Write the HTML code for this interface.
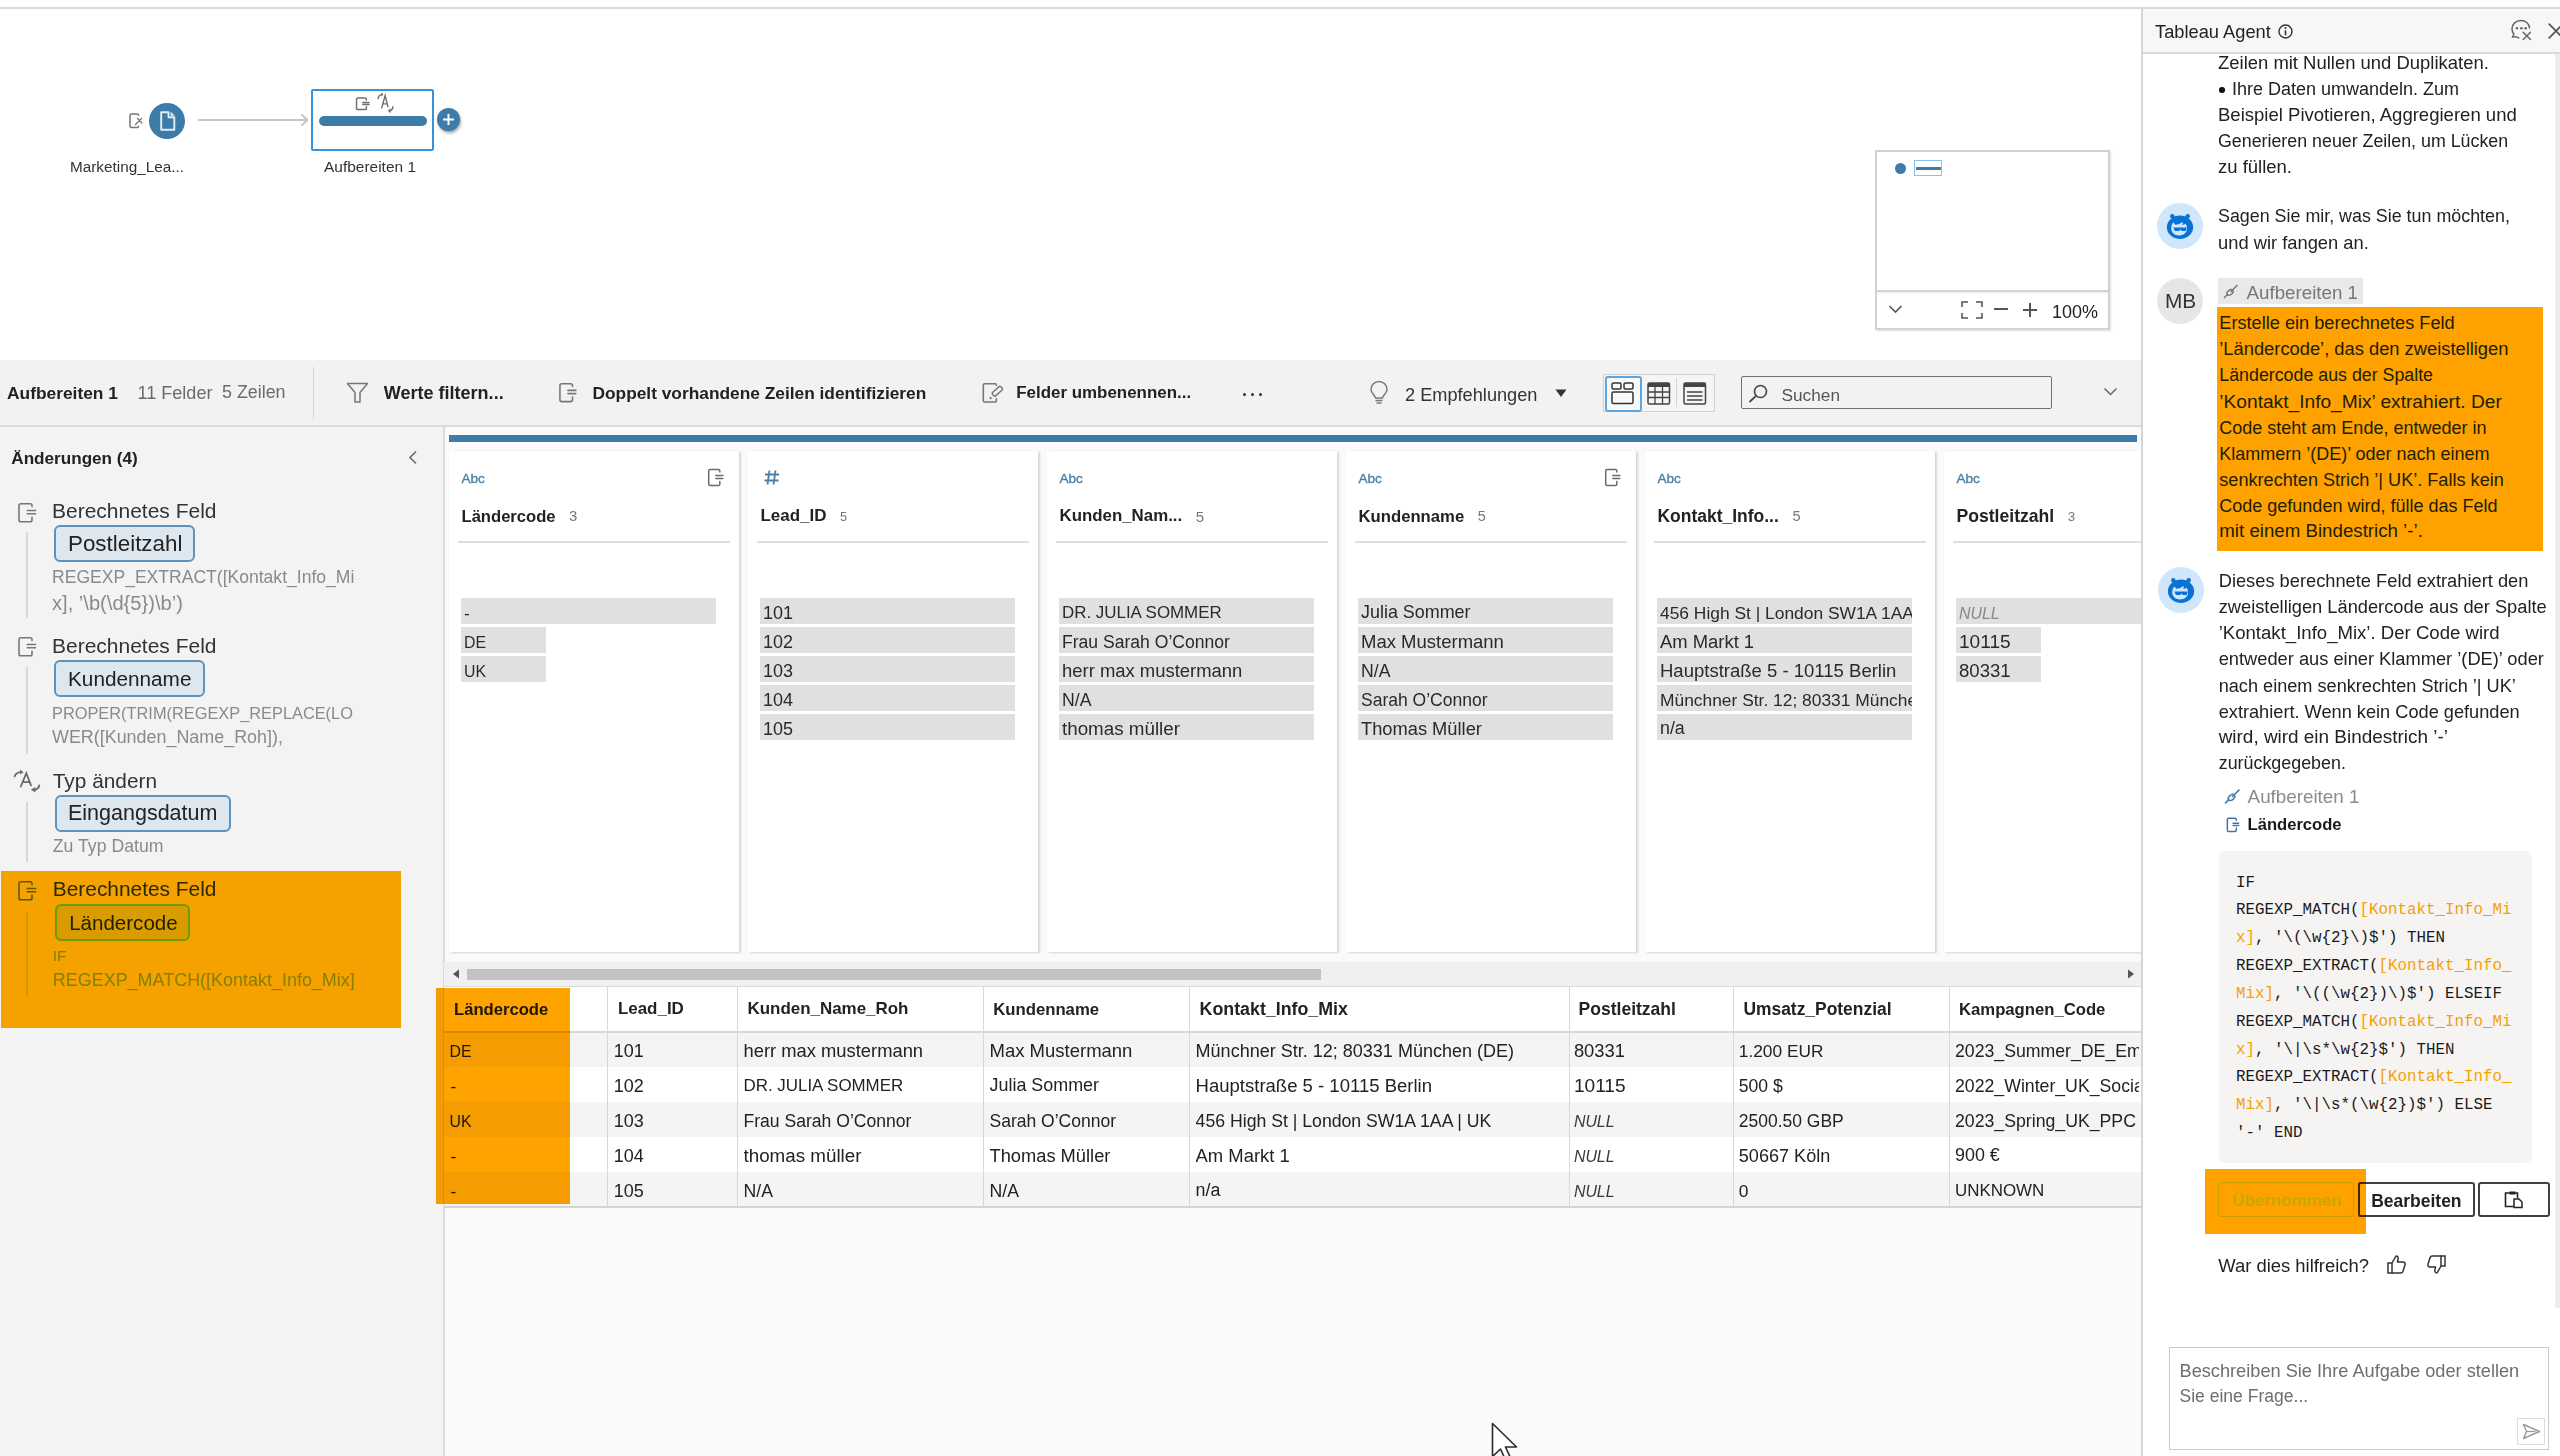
<!DOCTYPE html>
<html><head><meta charset="utf-8">
<style>
html,body{margin:0;padding:0;}
body{width:2560px;height:1456px;position:relative;overflow:hidden;background:#fff;font-family:"Liberation Sans",sans-serif;}
.ts,.tm{position:absolute;white-space:pre;line-height:1;}
.ts{font-family:"Liberation Sans",sans-serif;}
.tm{font-family:"Liberation Mono",monospace;}
svg{position:absolute;overflow:visible;}
</style></head><body>
<div style="position:absolute;left:0px;top:7px;width:2560px;height:2px;background:#d9d9d9"></div>
<div style="position:absolute;left:0px;top:360px;width:2141px;height:66px;background:#f2f2f2"></div>
<div style="position:absolute;left:0px;top:425px;width:2141px;height:2px;background:#dcdcdc"></div>
<div style="position:absolute;left:0px;top:427px;width:443px;height:1029px;background:#f3f3f3"></div>
<div style="position:absolute;left:443px;top:427px;width:2px;height:1029px;background:#dadada"></div>
<div style="position:absolute;left:445px;top:427px;width:1696px;height:1029px;background:#fafafa"></div>
<div style="position:absolute;left:2141px;top:9px;width:2px;height:1447px;background:#d6d6d6"></div>
<div style="position:absolute;left:2143px;top:9px;width:417px;height:43px;background:#f7f7f7"></div>
<div style="position:absolute;left:2143px;top:52px;width:417px;height:2px;background:#d9d9d9"></div>
<svg style="left:128px;top:112px" width="18" height="18" viewBox="0 0 18 18"><path d="M10.5 3.2V3Q10.5 2 9.5 2H3.5Q2 2 2 3.5V14Q2 15.5 3.5 15.5H9.5Q10.5 15.5 10.5 14.5V14.2" fill="none" stroke="#777" stroke-width="1.5" stroke-linecap="round"/><path d="M7.5 12.5l6-6M9.5 6.5l4.5 4.5" stroke="#777" stroke-width="1.3" stroke-linecap="round"/></svg>
<div style="position:absolute;left:149px;top:103px;width:36px;height:36px;background:#3d7ca8;border-radius:50%"></div>
<svg style="left:159px;top:110px" width="18" height="22" viewBox="0 0 18 22"><path d="M2.2 2.2h7.3v5h5.8v12.6H2.2z" fill="none" stroke="#e4edf4" stroke-width="1.9" stroke-linejoin="round"/><path d="M11.6 1.6l4.2 4.2h-4.2z" fill="#e4edf4"/></svg>
<div style="position:absolute;left:198px;top:119.2px;width:108px;height:2px;background:#c6c6c6"></div>
<svg style="left:300px;top:113px" width="10" height="14" viewBox="0 0 10 14"><path d="M2 2l5.5 5L2 12" fill="none" stroke="#c6c6c6" stroke-width="2" stroke-linecap="round" stroke-linejoin="round"/></svg>
<div style="position:absolute;left:311px;top:89px;width:119px;height:58px;border:2px solid #3593de;border-radius:2px;background:#fff"></div>
<div style="position:absolute;left:319px;top:116px;width:108px;height:10px;background:#3d7ca8;border-radius:5px"></div>
<svg style="left:354.59px;top:96.93px" width="15.19" height="13.96" viewBox="0 0 20 22" preserveAspectRatio="none"><path vector-effect="non-scaling-stroke" d="M15 4.6V3.5Q15 1.7 13.2 1.7H3.8Q2 1.7 2 3.5V18Q2 19.8 3.8 19.8H13.2Q15 19.8 15 18V15.2M10.3 8.5H18.5M10.3 11.7H18.5" fill="none" stroke="#707070" stroke-width="1.5" stroke-linecap="round"/></svg>
<svg style="left:373.85px;top:87.10px" width="24.31" height="31.45" viewBox="0 0 40 34" preserveAspectRatio="none"><path vector-effect="non-scaling-stroke" d="M6.6 12.4Q8 8.6 12.6 8.2M12.8 22.5L18.3 9.2 23 21.4M14.8 18.2H21.6M31.3 21.3Q30.5 25.3 26.5 25.8" fill="none" stroke="#707070" stroke-width="1.4" stroke-linecap="round"/><path d="M12 5.6L15.6 8.2 12.2 10.4zM27.4 23L22.8 25.8 27.2 28.3z" fill="#707070"/></svg>
<div style="position:absolute;left:437px;top:108px;width:23px;height:23px;background:#3d7ca8;border-radius:50%;box-shadow:1px 2px 3px rgba(0,0,0,0.35)"></div>
<svg style="left:441px;top:112px" width="15" height="15" viewBox="0 0 15 15"><path d="M7.5 2v11M2 7.5h11" stroke="#fff" stroke-width="2"/></svg>
<div class="ts" style="left:70px;top:159.09px;font-size:15.3px;color:#333;">Marketing_Lea...</div>
<div class="ts" style="left:324px;top:158.95px;font-size:15.47px;color:#333;">Aufbereiten 1</div>
<div style="position:absolute;left:1875px;top:150px;width:231px;height:176px;border:2px solid #d2d2d2;background:#fff;box-shadow:1px 1px 2px rgba(0,0,0,0.12)"></div>
<div style="position:absolute;left:1877px;top:290px;width:231px;height:2px;background:#d4d4d4;box-shadow:0 1px 2px rgba(0,0,0,0.1)"></div>
<div style="position:absolute;left:1895px;top:163px;width:11px;height:11px;background:#3d7ca8;border-radius:50%"></div>
<div style="position:absolute;left:1914px;top:160px;width:26px;height:14px;border:1.5px solid #8cc2ec;background:#fff"></div>
<div style="position:absolute;left:1916px;top:167px;width:25px;height:3px;background:#3d7ca8"></div>
<svg style="left:1888px;top:304px" width="15" height="11" viewBox="0 0 15 11"><path d="M1.5 2l6 6 6-6" fill="none" stroke="#555" stroke-width="1.6"/></svg>
<svg style="left:1961px;top:301px" width="22" height="18" viewBox="0 0 22 18"><path d="M1 6V1h6M15 1h6v5M21 12v5h-6M7 17H1v-5" fill="none" stroke="#555" stroke-width="1.6"/></svg>
<div style="position:absolute;left:1994px;top:308px;width:14px;height:2px;background:#555"></div>
<div style="position:absolute;left:2023px;top:309px;width:14px;height:2px;background:#555"></div>
<div style="position:absolute;left:2029px;top:303px;width:2px;height:14px;background:#555"></div>
<div class="ts" style="left:2052px;top:303.31px;font-size:17.99px;color:#222;">100%</div>
<div class="ts" style="left:7px;top:384.84px;font-size:17.37px;color:#222;font-weight:bold;">Aufbereiten 1</div>
<div class="ts" style="left:137.5px;top:384.24px;font-size:18.07px;color:#6b6b6b;">11 Felder</div>
<div class="ts" style="left:222px;top:384.43px;font-size:17.85px;color:#6b6b6b;">5 Zeilen</div>
<div style="position:absolute;left:313px;top:367px;width:1px;height:52px;background:#d4d4d4"></div>
<svg style="left:346px;top:382px" width="23" height="22" viewBox="0 0 23 22"><path d="M1.5 1.5h20l-7.5 9v9.5h-5v-9.5z" fill="none" stroke="#777" stroke-width="1.5" stroke-linejoin="round"/></svg>
<div class="ts" style="left:383.75px;top:384.26px;font-size:18.05px;color:#222;font-weight:bold;">Werte filtern...</div>
<svg style="left:557.59px;top:382.11px" width="19.34" height="21.78" viewBox="0 0 20 22" preserveAspectRatio="none"><path vector-effect="non-scaling-stroke" d="M15 4.6V3.5Q15 1.7 13.2 1.7H3.8Q2 1.7 2 3.5V18Q2 19.8 3.8 19.8H13.2Q15 19.8 15 18V15.2M10.3 8.5H18.5M10.3 11.7H18.5" fill="none" stroke="#777" stroke-width="1.6" stroke-linecap="round"/></svg>
<div class="ts" style="left:592.5px;top:384.88px;font-size:17.32px;color:#222;font-weight:bold;">Doppelt vorhandene Zeilen identifizieren</div>
<svg style="left:980px;top:380px" width="26" height="26" viewBox="0 0 26 26"><path d="M16.3 5.3V4.8Q16.3 3.8 15.3 3.8H4.8Q3.3 3.8 3.3 5.3V20.5Q3.3 22 4.8 22H15.3Q16.3 22 16.3 21V18.8" fill="none" stroke="#777" stroke-width="1.6" stroke-linecap="round"/><rect x="-5.6" y="-2.25" width="11.2" height="4.5" rx="1.2" transform="translate(17.35 11.25) rotate(-42)" fill="none" stroke="#777" stroke-width="1.5"/><path d="M9.7 16.2L12.6 18.8 9.6 19.3z" fill="#777"/></svg>
<div class="ts" style="left:1016.25px;top:385.21px;font-size:16.93px;color:#222;font-weight:bold;">Felder umbenennen...</div>
<div style="position:absolute;left:1243px;top:393px;width:3px;height:3px;background:#333;border-radius:50%"></div>
<div style="position:absolute;left:1251px;top:393px;width:3px;height:3px;background:#333;border-radius:50%"></div>
<div style="position:absolute;left:1259px;top:393px;width:3px;height:3px;background:#333;border-radius:50%"></div>
<svg style="left:1369px;top:382px" width="20" height="24" viewBox="0 0 20 24"><path d="M6.5 16c0-2.5-4.5-4.5-4.5-8.5a8 8 0 0 1 16 0c0 4-4.5 6-4.5 8.5z" fill="none" stroke="#777" stroke-width="1.5" stroke-linejoin="round"/><path d="M6.5 18.5h7M7.5 21h5" stroke="#777" stroke-width="1.5"/></svg>
<div class="ts" style="left:1405px;top:385.64px;font-size:18.19px;color:#333;">2 Empfehlungen</div>
<svg style="left:1555px;top:389px" width="12" height="9" viewBox="0 0 12 9"><path d="M0.5 0.5h11L6 8z" fill="#333"/></svg>
<div style="position:absolute;left:1603px;top:374px;width:110px;height:36px;border:1px solid #d3d3d3;background:#f5f5f5"></div>
<div style="position:absolute;left:1605px;top:376px;width:33px;height:32px;border:2px solid #5aa7e6;border-radius:3px;background:#f9f9f9"></div>
<div style="position:absolute;left:1676px;top:378px;width:1px;height:29px;background:#d3d3d3"></div>
<svg style="left:1611px;top:382px" width="24" height="23" viewBox="0 0 24 23"><rect x="1" y="1" width="9" height="6" rx="1.5" fill="none" stroke="#333" stroke-width="1.5"/><rect x="13" y="1" width="9" height="6" rx="1.5" fill="none" stroke="#333" stroke-width="1.5"/><rect x="1" y="10" width="21" height="11.5" rx="1.5" fill="none" stroke="#333" stroke-width="1.5"/></svg>
<svg style="left:1647px;top:382px" width="24" height="23" viewBox="0 0 24 23"><rect x="1" y="1" width="21.5" height="21" rx="1.5" fill="none" stroke="#444" stroke-width="1.5"/><rect x="1" y="1" width="21.5" height="4" fill="#444"/><path d="M1 10h21.5M1 15.5h21.5M8 5v17M15.5 5v17" stroke="#444" stroke-width="1.3"/></svg>
<svg style="left:1683px;top:382px" width="24" height="23" viewBox="0 0 24 23"><rect x="1" y="1" width="21.5" height="21" rx="1.5" fill="none" stroke="#444" stroke-width="1.5"/><rect x="1" y="1" width="21.5" height="4" fill="#444"/><path d="M4 10h15.5M4 14h15.5M4 18h15.5" stroke="#444" stroke-width="1.3"/></svg>
<div style="position:absolute;left:1741px;top:376px;width:309px;height:31px;border:1.5px solid #6f6f6f;border-radius:2px;background:#f2f2f2"></div>
<svg style="left:1748px;top:384px" width="21" height="19" viewBox="0 0 21 19"><circle cx="12.5" cy="7.5" r="6" fill="none" stroke="#444" stroke-width="1.6"/><path d="M8.3 11.7L1.5 18" stroke="#444" stroke-width="1.8"/></svg>
<div class="ts" style="left:1781.5px;top:386.54px;font-size:17.25px;color:#555;">Suchen</div>
<svg style="left:2103px;top:387px" width="15" height="10" viewBox="0 0 15 10"><path d="M1.5 1.5l6 6 6-6" fill="none" stroke="#666" stroke-width="1.5"/></svg>
<div class="ts" style="left:11.3px;top:450.05px;font-size:17.12px;color:#222;font-weight:bold;">Änderungen (4)</div>
<svg style="left:408px;top:450px" width="10" height="15" viewBox="0 0 10 15"><path d="M8 1.5l-6 6 6 6" fill="none" stroke="#666" stroke-width="1.5"/></svg>
<svg style="left:17.00px;top:501.80px" width="20.00" height="22.00" viewBox="0 0 20 22" preserveAspectRatio="none"><path vector-effect="non-scaling-stroke" d="M15 4.6V3.5Q15 1.7 13.2 1.7H3.8Q2 1.7 2 3.5V18Q2 19.8 3.8 19.8H13.2Q15 19.8 15 18V15.2M10.3 8.5H18.5M10.3 11.7H18.5" fill="none" stroke="#777" stroke-width="1.6" stroke-linecap="round"/></svg>
<div class="ts" style="left:52px;top:500.46px;font-size:20.99px;color:#333;">Berechnetes Feld</div>
<div style="position:absolute;left:54.4px;top:525.2px;width:141px;height:37px;background:#dde7ef;border:2px solid #5e93bb;border-radius:6px;box-sizing:border-box"></div>
<div class="ts" style="left:68px;top:532.87px;font-size:22.39px;color:#222;">Postleitzahl</div>
<div style="position:absolute;left:25.5px;top:532px;width:2px;height:86px;background:#d9d9d9"></div>
<div class="ts" style="left:52px;top:569.17px;font-size:17.56px;color:#8a8a8a;">REGEXP_EXTRACT([Kontakt_Info_Mi</div>
<div class="ts" style="left:52px;top:593.28px;font-size:20.14px;color:#8a8a8a;">x], ’\b(\d{5})\b’)</div>
<svg style="left:17.00px;top:635.80px" width="20.00" height="22.00" viewBox="0 0 20 22" preserveAspectRatio="none"><path vector-effect="non-scaling-stroke" d="M15 4.6V3.5Q15 1.7 13.2 1.7H3.8Q2 1.7 2 3.5V18Q2 19.8 3.8 19.8H13.2Q15 19.8 15 18V15.2M10.3 8.5H18.5M10.3 11.7H18.5" fill="none" stroke="#777" stroke-width="1.6" stroke-linecap="round"/></svg>
<div class="ts" style="left:52px;top:635.36px;font-size:20.99px;color:#333;">Berechnetes Feld</div>
<div style="position:absolute;left:54.4px;top:660px;width:151px;height:37px;background:#dde7ef;border:2px solid #5e93bb;border-radius:6px;box-sizing:border-box"></div>
<div class="ts" style="left:68px;top:669.15px;font-size:20.76px;color:#222;">Kundenname</div>
<div style="position:absolute;left:25.5px;top:667px;width:2px;height:87px;background:#d9d9d9"></div>
<div class="ts" style="left:52px;top:704.69px;font-size:16.37px;color:#8a8a8a;">PROPER(TRIM(REGEXP_REPLACE(LO</div>
<div class="ts" style="left:52px;top:729.38px;font-size:17.91px;color:#8a8a8a;">WER([Kunden_Name_Roh]),</div>
<svg style="left:8.00px;top:764.00px" width="40.00" height="34.00" viewBox="0 0 40 34" preserveAspectRatio="none"><path vector-effect="non-scaling-stroke" d="M6.6 12.4Q8 8.6 12.6 8.2M12.8 22.5L18.3 9.2 23 21.4M14.8 18.2H21.6M31.3 21.3Q30.5 25.3 26.5 25.8" fill="none" stroke="#6a6a6a" stroke-width="1.8" stroke-linecap="round"/><path d="M12 5.6L15.6 8.2 12.2 10.4zM27.4 23L22.8 25.8 27.2 28.3z" fill="#6a6a6a"/></svg>
<div class="ts" style="left:52.8px;top:770.79px;font-size:20.83px;color:#333;">Typ ändern</div>
<div style="position:absolute;left:54.9px;top:795px;width:176.5px;height:37px;background:#dde7ef;border:2px solid #5e93bb;border-radius:6px;box-sizing:border-box"></div>
<div class="ts" style="left:68px;top:802.52px;font-size:21.51px;color:#222;">Eingangsdatum</div>
<div style="position:absolute;left:25.5px;top:802px;width:2px;height:60px;background:#d9d9d9"></div>
<div class="ts" style="left:52.8px;top:838.17px;font-size:17.68px;color:#8a8a8a;">Zu Typ Datum</div>
<div style="position:absolute;left:1px;top:871px;width:400px;height:157px;background:#f5a100"></div>
<svg style="left:17.00px;top:879.80px" width="20.00" height="22.00" viewBox="0 0 20 22" preserveAspectRatio="none"><path vector-effect="non-scaling-stroke" d="M15 4.6V3.5Q15 1.7 13.2 1.7H3.8Q2 1.7 2 3.5V18Q2 19.8 3.8 19.8H13.2Q15 19.8 15 18V15.2M10.3 8.5H18.5M10.3 11.7H18.5" fill="none" stroke="#5a5a00" stroke-width="1.6" stroke-linecap="round"/></svg>
<div class="ts" style="left:52.8px;top:878.64px;font-size:20.89px;color:#2a2a00;">Berechnetes Feld</div>
<div style="position:absolute;left:54.9px;top:903.7px;width:135.6px;height:37px;background:#d89c00;border:2px solid #6d9a00;border-radius:6px;box-sizing:border-box"></div>
<div class="ts" style="left:69.2px;top:912.54px;font-size:20.54px;color:#1f1f00;">Ländercode</div>
<div style="position:absolute;left:25.5px;top:911px;width:2px;height:86px;background:#cf9a00"></div>
<div class="ts" style="left:52.8px;top:948.2px;font-size:15.41px;color:#858000;">IF</div>
<div class="ts" style="left:52.8px;top:972.03px;font-size:17.97px;color:#858000;">REGEXP_MATCH([Kontakt_Info_Mix]</div>
<div style="position:absolute;left:449px;top:435px;width:1688px;height:7px;background:#3d7ca8"></div>
<div style="position:absolute;left:444px;top:442px;width:1697px;height:520px;overflow:hidden">
<div style="position:absolute;left:5px;top:9px;width:290px;height:501px;background:#fff;box-shadow:2px 1px 2px rgba(0,0,0,0.14), 0 0 1px rgba(0,0,0,0.06)"></div>
<div class="ts" style="left:17.5px;top:30.06px;font-size:13.58px;color:#4a80a8;-webkit-text-stroke:0.35px #4a80a8;">Abc</div>
<svg style="left:262.97px;top:26.20px" width="17.13" height="19.54" viewBox="0 0 20 22" preserveAspectRatio="none"><path vector-effect="non-scaling-stroke" d="M15 4.6V3.5Q15 1.7 13.2 1.7H3.8Q2 1.7 2 3.5V18Q2 19.8 3.8 19.8H13.2Q15 19.8 15 18V15.2M10.3 8.5H18.5M10.3 11.7H18.5" fill="none" stroke="#6a6a6a" stroke-width="1.5" stroke-linecap="round"/></svg>
<div class="ts" style="left:17.5px;top:66.69px;font-size:16.6px;color:#222;font-weight:bold;">Ländercode</div>
<div class="ts" style="left:125.1px;top:66.92px;font-size:14.92px;color:#777;">3</div>
<div style="position:absolute;left:14px;top:99px;width:272px;height:2px;background:#dedede"></div>
<div style="position:absolute;left:16.5px;top:156px;width:255px;height:25.5px;background:#e0e0e0;overflow:hidden">
<div class="ts" style="left:3.5px;top:6.81px;font-size:17.4px;color:#2a2a2a;">-</div>
</div>
<div style="position:absolute;left:16.5px;top:185px;width:85px;height:25.5px;background:#e0e0e0;overflow:hidden">
<div class="ts" style="left:3.5px;top:8.14px;font-size:15.84px;color:#2a2a2a;">DE</div>
</div>
<div style="position:absolute;left:16.5px;top:214px;width:85px;height:25.5px;background:#e0e0e0;overflow:hidden">
<div class="ts" style="left:3.5px;top:8.14px;font-size:15.84px;color:#2a2a2a;">UK</div>
</div>
<div style="position:absolute;left:304px;top:9px;width:290px;height:501px;background:#fff;box-shadow:2px 1px 2px rgba(0,0,0,0.14), 0 0 1px rgba(0,0,0,0.06)"></div>
<svg style="left:319.5px;top:28px" width="16" height="15" viewBox="0 0 16 15"><path d="M5.5 0.5l-2 14M11.5 0.5l-2 14M1 4.5h14M0.5 10.5h14" stroke="#4b80a9" stroke-width="1.8"/></svg>
<div class="ts" style="left:316.5px;top:66.38px;font-size:16.97px;color:#222;font-weight:bold;">Lead_ID</div>
<div class="ts" style="left:396.0px;top:68.75px;font-size:12.76px;color:#777;">5</div>
<div style="position:absolute;left:313px;top:99px;width:272px;height:2px;background:#dedede"></div>
<div style="position:absolute;left:315.5px;top:156px;width:255px;height:25.5px;background:#e0e0e0;overflow:hidden">
<div class="ts" style="left:3.5px;top:6.32px;font-size:17.98px;color:#2a2a2a;">101</div>
</div>
<div style="position:absolute;left:315.5px;top:185px;width:255px;height:25.5px;background:#e0e0e0;overflow:hidden">
<div class="ts" style="left:3.5px;top:6.32px;font-size:17.98px;color:#2a2a2a;">102</div>
</div>
<div style="position:absolute;left:315.5px;top:214px;width:255px;height:25.5px;background:#e0e0e0;overflow:hidden">
<div class="ts" style="left:3.5px;top:6.32px;font-size:17.98px;color:#2a2a2a;">103</div>
</div>
<div style="position:absolute;left:315.5px;top:243px;width:255px;height:25.5px;background:#e0e0e0;overflow:hidden">
<div class="ts" style="left:3.5px;top:6.32px;font-size:17.98px;color:#2a2a2a;">104</div>
</div>
<div style="position:absolute;left:315.5px;top:272px;width:255px;height:25.5px;background:#e0e0e0;overflow:hidden">
<div class="ts" style="left:3.5px;top:6.32px;font-size:17.98px;color:#2a2a2a;">105</div>
</div>
<div style="position:absolute;left:603px;top:9px;width:290px;height:501px;background:#fff;box-shadow:2px 1px 2px rgba(0,0,0,0.14), 0 0 1px rgba(0,0,0,0.06)"></div>
<div class="ts" style="left:615.5px;top:30.06px;font-size:13.58px;color:#4a80a8;-webkit-text-stroke:0.35px #4a80a8;">Abc</div>
<div class="ts" style="left:615.5px;top:66.47px;font-size:16.86px;color:#222;font-weight:bold;">Kunden_Nam...</div>
<div class="ts" style="left:751.7px;top:66.77px;font-size:15.1px;color:#777;">5</div>
<div style="position:absolute;left:612px;top:99px;width:272px;height:2px;background:#dedede"></div>
<div style="position:absolute;left:614.5px;top:156px;width:255px;height:25.5px;background:#e0e0e0;overflow:hidden">
<div class="ts" style="left:3.5px;top:7.23px;font-size:16.91px;color:#2a2a2a;">DR. JULIA SOMMER</div>
</div>
<div style="position:absolute;left:614.5px;top:185px;width:255px;height:25.5px;background:#e0e0e0;overflow:hidden">
<div class="ts" style="left:3.5px;top:6.67px;font-size:17.57px;color:#2a2a2a;">Frau Sarah O’Connor</div>
</div>
<div style="position:absolute;left:614.5px;top:214px;width:255px;height:25.5px;background:#e0e0e0;overflow:hidden">
<div class="ts" style="left:3.5px;top:5.93px;font-size:18.44px;color:#2a2a2a;">herr max mustermann</div>
</div>
<div style="position:absolute;left:614.5px;top:243px;width:255px;height:25.5px;background:#e0e0e0;overflow:hidden">
<div class="ts" style="left:3.5px;top:6.61px;font-size:17.64px;color:#2a2a2a;">N/A</div>
</div>
<div style="position:absolute;left:614.5px;top:272px;width:255px;height:25.5px;background:#e0e0e0;overflow:hidden">
<div class="ts" style="left:3.5px;top:5.63px;font-size:18.79px;color:#2a2a2a;">thomas müller</div>
</div>
<div style="position:absolute;left:902px;top:9px;width:290px;height:501px;background:#fff;box-shadow:2px 1px 2px rgba(0,0,0,0.14), 0 0 1px rgba(0,0,0,0.06)"></div>
<div class="ts" style="left:914.5px;top:30.06px;font-size:13.58px;color:#4a80a8;-webkit-text-stroke:0.35px #4a80a8;">Abc</div>
<svg style="left:1159.97px;top:26.20px" width="17.13" height="19.54" viewBox="0 0 20 22" preserveAspectRatio="none"><path vector-effect="non-scaling-stroke" d="M15 4.6V3.5Q15 1.7 13.2 1.7H3.8Q2 1.7 2 3.5V18Q2 19.8 3.8 19.8H13.2Q15 19.8 15 18V15.2M10.3 8.5H18.5M10.3 11.7H18.5" fill="none" stroke="#6a6a6a" stroke-width="1.5" stroke-linecap="round"/></svg>
<div class="ts" style="left:914.5px;top:66.61px;font-size:16.7px;color:#222;font-weight:bold;">Kundenname</div>
<div class="ts" style="left:1033.8px;top:67.38px;font-size:14.38px;color:#777;">5</div>
<div style="position:absolute;left:911px;top:99px;width:272px;height:2px;background:#dedede"></div>
<div style="position:absolute;left:913.5px;top:156px;width:255px;height:25.5px;background:#e0e0e0;overflow:hidden">
<div class="ts" style="left:3.5px;top:6.36px;font-size:17.93px;color:#2a2a2a;">Julia Sommer</div>
</div>
<div style="position:absolute;left:913.5px;top:185px;width:255px;height:25.5px;background:#e0e0e0;overflow:hidden">
<div class="ts" style="left:3.5px;top:5.88px;font-size:18.5px;color:#2a2a2a;">Max Mustermann</div>
</div>
<div style="position:absolute;left:913.5px;top:214px;width:255px;height:25.5px;background:#e0e0e0;overflow:hidden">
<div class="ts" style="left:3.5px;top:6.61px;font-size:17.64px;color:#2a2a2a;">N/A</div>
</div>
<div style="position:absolute;left:913.5px;top:243px;width:255px;height:25.5px;background:#e0e0e0;overflow:hidden">
<div class="ts" style="left:3.5px;top:6.7px;font-size:17.53px;color:#2a2a2a;">Sarah O’Connor</div>
</div>
<div style="position:absolute;left:913.5px;top:272px;width:255px;height:25.5px;background:#e0e0e0;overflow:hidden">
<div class="ts" style="left:3.5px;top:6.04px;font-size:18.3px;color:#2a2a2a;">Thomas Müller</div>
</div>
<div style="position:absolute;left:1201px;top:9px;width:290px;height:501px;background:#fff;box-shadow:2px 1px 2px rgba(0,0,0,0.14), 0 0 1px rgba(0,0,0,0.06)"></div>
<div class="ts" style="left:1213.5px;top:30.06px;font-size:13.58px;color:#4a80a8;-webkit-text-stroke:0.35px #4a80a8;">Abc</div>
<div class="ts" style="left:1213.5px;top:65.94px;font-size:17.48px;color:#222;font-weight:bold;">Kontakt_Info...</div>
<div class="ts" style="left:1348.4px;top:67.22px;font-size:14.56px;color:#777;">5</div>
<div style="position:absolute;left:1210px;top:99px;width:272px;height:2px;background:#dedede"></div>
<div style="position:absolute;left:1212.5px;top:156px;width:255px;height:25.5px;background:#e0e0e0;overflow:hidden">
<div class="ts" style="left:3.5px;top:6.81px;font-size:17.4px;color:#2a2a2a;">456 High St | London SW1A 1AA | UK</div>
</div>
<div style="position:absolute;left:1212.5px;top:185px;width:255px;height:25.5px;background:#e0e0e0;overflow:hidden">
<div class="ts" style="left:3.5px;top:5.95px;font-size:18.41px;color:#2a2a2a;">Am Markt 1</div>
</div>
<div style="position:absolute;left:1212.5px;top:214px;width:255px;height:25.5px;background:#e0e0e0;overflow:hidden">
<div class="ts" style="left:3.5px;top:5.85px;font-size:18.53px;color:#2a2a2a;">Hauptstraße 5 - 10115 Berlin</div>
</div>
<div style="position:absolute;left:1212.5px;top:243px;width:255px;height:25.5px;background:#e0e0e0;overflow:hidden">
<div class="ts" style="left:3.5px;top:6.81px;font-size:17.4px;color:#2a2a2a;">Münchner Str. 12; 80331 München (DE)</div>
</div>
<div style="position:absolute;left:1212.5px;top:272px;width:255px;height:25.5px;background:#e0e0e0;overflow:hidden">
<div class="ts" style="left:3.5px;top:6.44px;font-size:17.84px;color:#2a2a2a;">n/a</div>
</div>
<div style="position:absolute;left:1500px;top:9px;width:290px;height:501px;background:#fff;box-shadow:2px 1px 2px rgba(0,0,0,0.14), 0 0 1px rgba(0,0,0,0.06)"></div>
<div class="ts" style="left:1512.5px;top:30.06px;font-size:13.58px;color:#4a80a8;-webkit-text-stroke:0.35px #4a80a8;">Abc</div>
<div class="ts" style="left:1512.5px;top:65.86px;font-size:17.58px;color:#222;font-weight:bold;">Postleitzahl</div>
<div class="ts" style="left:1623.7px;top:68.29px;font-size:13.3px;color:#777;">3</div>
<div style="position:absolute;left:1509px;top:99px;width:272px;height:2px;background:#dedede"></div>
<div style="position:absolute;left:1511.5px;top:156px;width:255px;height:25.5px;background:#e0e0e0;overflow:hidden">
<div class="ts" style="left:3.5px;top:8.07px;font-size:15.92px;color:#888;font-style:italic;">NULL</div>
</div>
<div style="position:absolute;left:1511.5px;top:185px;width:85px;height:25.5px;background:#e0e0e0;overflow:hidden">
<div class="ts" style="left:3.5px;top:5.37px;font-size:19.1px;color:#2a2a2a;">10115</div>
</div>
<div style="position:absolute;left:1511.5px;top:214px;width:85px;height:25.5px;background:#e0e0e0;overflow:hidden">
<div class="ts" style="left:3.5px;top:5.8px;font-size:18.59px;color:#2a2a2a;">80331</div>
</div>
</div>
<div style="position:absolute;left:444px;top:962px;width:1697px;height:24px;background:#f0f0f0"></div>
<div style="position:absolute;left:466.5px;top:968.5px;width:854px;height:11.5px;background:#c2c2c2"></div>
<svg style="left:452px;top:969px" width="8" height="10" viewBox="0 0 8 10"><path d="M7 0.5v9L1 5z" fill="#555"/></svg>
<svg style="left:2127px;top:969px" width="8" height="10" viewBox="0 0 8 10"><path d="M1 0.5v9L7 5z" fill="#555"/></svg>
<div style="position:absolute;left:444px;top:986px;width:1697px;height:45px;background:#fff"></div>
<div style="position:absolute;left:444px;top:985.5px;width:1697px;height:1px;background:#dcdcdc"></div>
<div style="position:absolute;left:444px;top:1031.5px;width:1697px;height:35px;background:#f4f4f4"></div>
<div style="position:absolute;left:444px;top:1066.5px;width:1697px;height:35px;background:#ffffff"></div>
<div style="position:absolute;left:444px;top:1101.5px;width:1697px;height:35px;background:#f4f4f4"></div>
<div style="position:absolute;left:444px;top:1136.5px;width:1697px;height:35px;background:#ffffff"></div>
<div style="position:absolute;left:444px;top:1171.5px;width:1697px;height:35px;background:#f4f4f4"></div>
<div style="position:absolute;left:444px;top:1206px;width:1697px;height:1.5px;background:#d4d4d4"></div>
<div style="position:absolute;left:444px;top:1031px;width:1697px;height:1.8px;background:#d6d6d6"></div>
<div style="position:absolute;left:607px;top:986px;width:1.3px;height:220px;background:#d8d8d8"></div>
<div style="position:absolute;left:736.5px;top:986px;width:1.3px;height:220px;background:#d8d8d8"></div>
<div style="position:absolute;left:983px;top:986px;width:1.3px;height:220px;background:#d8d8d8"></div>
<div style="position:absolute;left:1189px;top:986px;width:1.3px;height:220px;background:#d8d8d8"></div>
<div style="position:absolute;left:1569px;top:986px;width:1.3px;height:220px;background:#d8d8d8"></div>
<div style="position:absolute;left:1733px;top:986px;width:1.3px;height:220px;background:#d8d8d8"></div>
<div style="position:absolute;left:1949px;top:986px;width:1.3px;height:220px;background:#d8d8d8"></div>
<div class="ts" style="left:454px;top:1001.66px;font-size:16.64px;color:#222;font-weight:bold;">Ländercode</div>
<div class="ts" style="left:449.5px;top:1040.18px;font-size:15.84px;color:#222;width:155.5px;overflow:hidden;padding:0.25em 0 0.3em 0;">DE</div>
<div class="ts" style="left:450.5px;top:1073.46px;font-size:17.4px;color:#222;width:153.5px;overflow:hidden;padding:0.25em 0 0.3em 0;">-</div>
<div class="ts" style="left:449.5px;top:1110.18px;font-size:15.84px;color:#222;width:155.5px;overflow:hidden;padding:0.25em 0 0.3em 0;">UK</div>
<div class="ts" style="left:450.5px;top:1143.46px;font-size:17.4px;color:#222;width:153.5px;overflow:hidden;padding:0.25em 0 0.3em 0;">-</div>
<div class="ts" style="left:450.5px;top:1178.46px;font-size:17.4px;color:#222;width:153.5px;overflow:hidden;padding:0.25em 0 0.3em 0;">-</div>
<div class="ts" style="left:617.9px;top:1001.38px;font-size:16.97px;color:#222;font-weight:bold;">Lead_ID</div>
<div class="ts" style="left:613.7px;top:1037.83px;font-size:17.98px;color:#222;width:120.79999999999995px;overflow:hidden;padding:0.25em 0 0.3em 0;">101</div>
<div class="ts" style="left:613.7px;top:1072.83px;font-size:17.98px;color:#222;width:120.79999999999995px;overflow:hidden;padding:0.25em 0 0.3em 0;">102</div>
<div class="ts" style="left:613.7px;top:1107.83px;font-size:17.98px;color:#222;width:120.79999999999995px;overflow:hidden;padding:0.25em 0 0.3em 0;">103</div>
<div class="ts" style="left:613.7px;top:1142.83px;font-size:17.98px;color:#222;width:120.79999999999995px;overflow:hidden;padding:0.25em 0 0.3em 0;">104</div>
<div class="ts" style="left:613.7px;top:1177.83px;font-size:17.98px;color:#222;width:120.79999999999995px;overflow:hidden;padding:0.25em 0 0.3em 0;">105</div>
<div class="ts" style="left:747.5px;top:1001.4px;font-size:16.94px;color:#222;font-weight:bold;">Kunden_Name_Roh</div>
<div class="ts" style="left:743.5px;top:1037.38px;font-size:18.38px;color:#222;width:237.5px;overflow:hidden;padding:0.25em 0 0.3em 0;">herr max mustermann</div>
<div class="ts" style="left:743.5px;top:1074.0px;font-size:16.91px;color:#222;width:237.5px;overflow:hidden;padding:0.25em 0 0.3em 0;">DR. JULIA SOMMER</div>
<div class="ts" style="left:743.5px;top:1108.28px;font-size:17.57px;color:#222;width:237.5px;overflow:hidden;padding:0.25em 0 0.3em 0;">Frau Sarah O’Connor</div>
<div class="ts" style="left:743.5px;top:1141.93px;font-size:18.79px;color:#222;width:237.5px;overflow:hidden;padding:0.25em 0 0.3em 0;">thomas müller</div>
<div class="ts" style="left:743.5px;top:1178.2px;font-size:17.64px;color:#222;width:237.5px;overflow:hidden;padding:0.25em 0 0.3em 0;">N/A</div>
<div class="ts" style="left:993.2px;top:1001.58px;font-size:16.73px;color:#222;font-weight:bold;">Kundenname</div>
<div class="ts" style="left:989.5px;top:1037.26px;font-size:18.5px;color:#222;width:197.5px;overflow:hidden;padding:0.25em 0 0.3em 0;">Max Mustermann</div>
<div class="ts" style="left:989.5px;top:1072.88px;font-size:17.93px;color:#222;width:197.5px;overflow:hidden;padding:0.25em 0 0.3em 0;">Julia Sommer</div>
<div class="ts" style="left:989.5px;top:1108.32px;font-size:17.53px;color:#222;width:197.5px;overflow:hidden;padding:0.25em 0 0.3em 0;">Sarah O’Connor</div>
<div class="ts" style="left:989.5px;top:1142.46px;font-size:18.3px;color:#222;width:197.5px;overflow:hidden;padding:0.25em 0 0.3em 0;">Thomas Müller</div>
<div class="ts" style="left:989.5px;top:1178.2px;font-size:17.64px;color:#222;width:197.5px;overflow:hidden;padding:0.25em 0 0.3em 0;">N/A</div>
<div class="ts" style="left:1199.6px;top:1000.66px;font-size:17.81px;color:#222;font-weight:bold;">Kontakt_Info_Mix</div>
<div class="ts" style="left:1195.6px;top:1037.76px;font-size:18.03px;color:#222;width:371.4000000000001px;overflow:hidden;padding:0.25em 0 0.3em 0;">Münchner Str. 12; 80331 München (DE)</div>
<div class="ts" style="left:1195.6px;top:1072.22px;font-size:18.53px;color:#222;width:371.4000000000001px;overflow:hidden;padding:0.25em 0 0.3em 0;">Hauptstraße 5 - 10115 Berlin</div>
<div class="ts" style="left:1195.6px;top:1108.16px;font-size:17.67px;color:#222;width:371.4000000000001px;overflow:hidden;padding:0.25em 0 0.3em 0;">456 High St | London SW1A 1AA | UK</div>
<div class="ts" style="left:1195.6px;top:1142.35px;font-size:18.41px;color:#222;width:371.4000000000001px;overflow:hidden;padding:0.25em 0 0.3em 0;">Am Markt 1</div>
<div class="ts" style="left:1195.6px;top:1177.98px;font-size:17.84px;color:#222;width:371.4000000000001px;overflow:hidden;padding:0.25em 0 0.3em 0;">n/a</div>
<div class="ts" style="left:1578.6px;top:1000.9px;font-size:17.53px;color:#222;font-weight:bold;">Postleitzahl</div>
<div class="ts" style="left:1573.9px;top:1037.38px;font-size:18.38px;color:#222;width:157.0999999999999px;overflow:hidden;padding:0.25em 0 0.3em 0;">80331</div>
<div class="ts" style="left:1573.9px;top:1071.59px;font-size:19.1px;color:#222;width:157.0999999999999px;overflow:hidden;padding:0.25em 0 0.3em 0;">10115</div>
<div class="ts" style="left:1573.9px;top:1110.09px;font-size:15.92px;color:#3a3a3a;font-style:italic;width:157.0999999999999px;overflow:hidden;padding:0.25em 0 0.3em 0;">NULL</div>
<div class="ts" style="left:1573.9px;top:1145.09px;font-size:15.92px;color:#3a3a3a;font-style:italic;width:157.0999999999999px;overflow:hidden;padding:0.25em 0 0.3em 0;">NULL</div>
<div class="ts" style="left:1573.9px;top:1180.09px;font-size:15.92px;color:#3a3a3a;font-style:italic;width:157.0999999999999px;overflow:hidden;padding:0.25em 0 0.3em 0;">NULL</div>
<div class="ts" style="left:1743.4px;top:1000.98px;font-size:17.43px;color:#222;font-weight:bold;">Umsatz_Potenzial</div>
<div class="ts" style="left:1738.8px;top:1038.56px;font-size:17.31px;color:#222;width:208.20000000000005px;overflow:hidden;padding:0.25em 0 0.3em 0;">1.200 EUR</div>
<div class="ts" style="left:1738.8px;top:1073.27px;font-size:17.58px;color:#222;width:208.20000000000005px;overflow:hidden;padding:0.25em 0 0.3em 0;">500 $</div>
<div class="ts" style="left:1738.8px;top:1108.36px;font-size:17.49px;color:#222;width:208.20000000000005px;overflow:hidden;padding:0.25em 0 0.3em 0;">2500.50 GBP</div>
<div class="ts" style="left:1738.8px;top:1142.71px;font-size:18.08px;color:#222;width:208.20000000000005px;overflow:hidden;padding:0.25em 0 0.3em 0;">50667 Köln</div>
<div class="ts" style="left:1738.8px;top:1178.46px;font-size:17.4px;color:#222;width:206.20000000000005px;overflow:hidden;padding:0.25em 0 0.3em 0;">0</div>
<div class="ts" style="left:1959px;top:1001.62px;font-size:16.68px;color:#222;font-weight:bold;">Kampagnen_Code</div>
<div class="ts" style="left:1955px;top:1038.14px;font-size:17.69px;color:#222;width:184px;overflow:hidden;padding:0.25em 0 0.3em 0;">2023_Summer_DE_Email</div>
<div class="ts" style="left:1955px;top:1073.14px;font-size:17.69px;color:#222;width:184px;overflow:hidden;padding:0.25em 0 0.3em 0;">2022_Winter_UK_Social</div>
<div class="ts" style="left:1955px;top:1108.14px;font-size:17.69px;color:#222;width:184px;overflow:hidden;padding:0.25em 0 0.3em 0;">2023_Spring_UK_PPC</div>
<div class="ts" style="left:1955px;top:1142.91px;font-size:17.9px;color:#222;width:184px;overflow:hidden;padding:0.25em 0 0.3em 0;">900 €</div>
<div class="ts" style="left:1955px;top:1178.99px;font-size:16.92px;color:#222;width:184px;overflow:hidden;padding:0.25em 0 0.3em 0;">UNKNOWN</div>
<div style="position:absolute;left:436px;top:988px;width:133.5px;height:216px;background:#ffa300;mix-blend-mode:multiply"></div>
<div class="ts" style="left:2155px;top:22.57px;font-size:18.27px;color:#222;">Tableau Agent</div>
<svg style="left:2278px;top:23.5px" width="15" height="15" viewBox="0 0 15 15"><circle cx="7.5" cy="7.5" r="6.5" fill="none" stroke="#333" stroke-width="1.4"/><path d="M7.5 6.3v5" stroke="#333" stroke-width="1.6"/><circle cx="7.5" cy="4" r="1" fill="#333"/></svg>
<svg style="left:2510px;top:19px" width="23" height="23" viewBox="0 0 23 23"><path d="M19.5 8.8C19 4.5 15.5 1.5 11 1.5 6 1.5 2 5 2 9.8c0 2 .7 3.8 1.8 5.2L2.6 18c2.3-.4 4.2 0 6.2.9" fill="none" stroke="#666" stroke-width="1.5" stroke-linecap="round"/><circle cx="7" cy="9.2" r="1.3" fill="#666"/><circle cx="11.4" cy="9.2" r="1.3" fill="#666"/><circle cx="15.7" cy="9.2" r="1.3" fill="#666"/><path d="M13.2 13.2l7.3 7.3M20.5 13.2l-7.3 7.3" stroke="#666" stroke-width="1.5" stroke-linecap="round"/></svg>
<svg style="left:2548px;top:22.5px" width="16" height="16" viewBox="0 0 16 16"><path d="M1.2 1.2l13.6 13.6M14.8 1.2L1.2 14.8" stroke="#555" stroke-width="1.7" stroke-linecap="round"/></svg>
<div style="position:absolute;left:2554.5px;top:54px;width:5.5px;height:1254px;background:#ececec"></div>
<div class="ts" style="left:2218px;top:54.1px;font-size:18.47px;color:#222;">Zeilen mit Nullen und Duplikaten.</div>
<div class="ts" style="left:2218px;top:106.33px;font-size:18.55px;color:#222;">Beispiel Pivotieren, Aggregieren und</div>
<div class="ts" style="left:2218px;top:133.15px;font-size:17.82px;color:#222;">Generieren neuer Zeilen, um Lücken</div>
<div class="ts" style="left:2218px;top:158.38px;font-size:18.49px;color:#222;">zu füllen.</div>
<div style="position:absolute;left:2219px;top:87px;width:5.5px;height:5.5px;background:#111;border-radius:50%"></div>
<div class="ts" style="left:2232px;top:80.49px;font-size:18.01px;color:#222;">Ihre Daten umwandeln. Zum</div>
<div style="position:absolute;left:2157.4px;top:203px;width:46px;height:46px;background:#cfe6fb;border-radius:50%"></div>
<svg style="left:2164.4px;top:212px" width="32" height="28" viewBox="0 0 32 28"><circle cx="8.3" cy="4.3" r="2.2" fill="#0a72d4"/><circle cx="23.7" cy="4.3" r="2.2" fill="#0a72d4"/><ellipse cx="16" cy="15.3" rx="13.1" ry="11.7" fill="#0a72d4"/><path d="M7.2 16.5c0-2.8.9-4.8 2.2-6 .8.9 1.4 1.6 2 2.3 2.6-.2 5-1.4 7-2.9.7 1.3.2 2.4-.3 3.1 1.6-.2 2.8-.7 3.6-1.3.8 1.3 1.4 2.9 1.4 4.8 0 4.2-3.8 7-8 7s-7.9-2.8-7.9-7z" fill="#cfe6fb"/><path d="M9.3 15.5h13.5l-1 3.6h-4l-1.3-1.5-1.3 1.5h-4.2z" fill="#0a72d4"/></svg>
<div class="ts" style="left:2218px;top:208.4px;font-size:17.88px;color:#222;">Sagen Sie mir, was Sie tun möchten,</div>
<div class="ts" style="left:2218px;top:234.02px;font-size:18.33px;color:#222;">und wir fangen an.</div>
<div style="position:absolute;left:2157px;top:278.4px;width:46px;height:46px;background:#e6e6e6;border-radius:50%"></div>
<div class="ts" style="left:2165px;top:291.12px;font-size:20.8px;color:#333;">MB</div>
<div style="position:absolute;left:2218px;top:278.4px;width:145px;height:25.5px;background:#e9e9e9"></div>
<svg style="left:2223px;top:284px" width="16" height="15" viewBox="0 0 16 15"><path d="M1 14l4-4M14.5 1l-7 7" stroke="#777" stroke-width="1.5"/><ellipse cx="7" cy="8.5" rx="3.5" ry="2.3" transform="rotate(-40 7 8.5)" fill="none" stroke="#777" stroke-width="1.4"/></svg>
<div class="ts" style="left:2246.6px;top:283.58px;font-size:18.73px;color:#777;">Aufbereiten 1</div>
<div style="position:absolute;left:2216.7px;top:307.2px;width:326px;height:243.7px;background:#ffa200"></div>
<div class="ts" style="left:2219.3px;top:314.35px;font-size:18.18px;color:#202000;">Erstelle ein berechnetes Feld</div>
<div class="ts" style="left:2219.3px;top:340.27px;font-size:18.32px;color:#202000;">’Ländercode’, das den zweistelligen</div>
<div class="ts" style="left:2219.3px;top:366.74px;font-size:17.81px;color:#202000;">Ländercode aus der Spalte</div>
<div class="ts" style="left:2219.3px;top:391.63px;font-size:19.17px;color:#202000;">’Kontakt_Info_Mix’ extrahiert. Der</div>
<div class="ts" style="left:2219.3px;top:418.65px;font-size:18.01px;color:#202000;">Code steht am Ende, entweder in</div>
<div class="ts" style="left:2219.3px;top:444.71px;font-size:17.99px;color:#202000;">Klammern ’(DE)’ oder nach einem</div>
<div class="ts" style="left:2219.3px;top:470.64px;font-size:18.12px;color:#202000;">senkrechten Strich ’| UK’. Falls kein</div>
<div class="ts" style="left:2219.3px;top:496.77px;font-size:18.01px;color:#202000;">Code gefunden wird, fülle das Feld</div>
<div class="ts" style="left:2219.3px;top:522.23px;font-size:18.69px;color:#202000;">mit einem Bindestrich ’-’.</div>
<div style="position:absolute;left:2157.5px;top:567px;width:46px;height:46px;background:#cfe6fb;border-radius:50%"></div>
<svg style="left:2164.5px;top:576px" width="32" height="28" viewBox="0 0 32 28"><circle cx="8.3" cy="4.3" r="2.2" fill="#0a72d4"/><circle cx="23.7" cy="4.3" r="2.2" fill="#0a72d4"/><ellipse cx="16" cy="15.3" rx="13.1" ry="11.7" fill="#0a72d4"/><path d="M7.2 16.5c0-2.8.9-4.8 2.2-6 .8.9 1.4 1.6 2 2.3 2.6-.2 5-1.4 7-2.9.7 1.3.2 2.4-.3 3.1 1.6-.2 2.8-.7 3.6-1.3.8 1.3 1.4 2.9 1.4 4.8 0 4.2-3.8 7-8 7s-7.9-2.8-7.9-7z" fill="#cfe6fb"/><path d="M9.3 15.5h13.5l-1 3.6h-4l-1.3-1.5-1.3 1.5h-4.2z" fill="#0a72d4"/></svg>
<div class="ts" style="left:2218.7px;top:572.17px;font-size:18.27px;color:#222;">Dieses berechnete Feld extrahiert den</div>
<div class="ts" style="left:2218.7px;top:598.22px;font-size:18.28px;color:#222;">zweistelligen Ländercode aus der Spalte</div>
<div class="ts" style="left:2218.7px;top:624.03px;font-size:18.58px;color:#222;">’Kontakt_Info_Mix’. Der Code wird</div>
<div class="ts" style="left:2218.7px;top:650.35px;font-size:18.27px;color:#222;">entweder aus einer Klammer ’(DE)’ oder</div>
<div class="ts" style="left:2218.7px;top:676.51px;font-size:18.15px;color:#222;">nach einem senkrechten Strich ’| UK’</div>
<div class="ts" style="left:2218.7px;top:702.52px;font-size:18.21px;color:#222;">extrahiert. Wenn kein Code gefunden</div>
<div class="ts" style="left:2218.7px;top:727.97px;font-size:18.93px;color:#222;">wird, wird ein Bindestrich ’-’</div>
<div class="ts" style="left:2218.7px;top:754.91px;font-size:17.89px;color:#222;">zurückgegeben.</div>
<svg style="left:2224px;top:788px" width="17" height="17" viewBox="0 0 16 15"><path d="M1 14l4-4M14.5 1l-7 7" stroke="#4a7ea6" stroke-width="1.5"/><ellipse cx="7" cy="8.5" rx="3.5" ry="2.3" transform="rotate(-40 7 8.5)" fill="none" stroke="#4a7ea6" stroke-width="1.4"/></svg>
<div class="ts" style="left:2247.6px;top:787.61px;font-size:18.81px;color:#8a8a8a;">Aufbereiten 1</div>
<svg style="left:2225.78px;top:817.34px" width="13.70" height="16.08" viewBox="0 0 20 22" preserveAspectRatio="none"><path vector-effect="non-scaling-stroke" d="M15 4.6V3.5Q15 1.7 13.2 1.7H3.8Q2 1.7 2 3.5V18Q2 19.8 3.8 19.8H13.2Q15 19.8 15 18V15.2M10.3 8.5H18.5M10.3 11.7H18.5" fill="none" stroke="#3f77a6" stroke-width="1.5" stroke-linecap="round"/></svg>
<div class="ts" style="left:2247.6px;top:817.21px;font-size:16.58px;color:#1a1a1a;font-weight:bold;">Ländercode</div>
<div style="position:absolute;left:2218.7px;top:851.4px;width:313.3px;height:312px;background:#f5f4f3;border-radius:7px"></div>
<div class="tm" style="left:2236px;top:875.57px;font-size:15.83px;color:#1a1a1a;">IF</div>
<div class="tm" style="left:2236px;top:903.4px;font-size:15.83px;color:#1a1a1a;">REGEXP_MATCH(</div>
<div class="tm" style="left:2359.461px;top:903.4px;font-size:15.83px;color:#f5a100;">[Kontakt_Info_Mi</div>
<div class="tm" style="left:2236px;top:931.23px;font-size:15.83px;color:#f5a100;">x]</div>
<div class="tm" style="left:2254.994px;top:931.23px;font-size:15.83px;color:#1a1a1a;">, '\(\w{2}\)$') THEN</div>
<div class="tm" style="left:2236px;top:959.06px;font-size:15.83px;color:#1a1a1a;">REGEXP_EXTRACT(</div>
<div class="tm" style="left:2378.455px;top:959.06px;font-size:15.83px;color:#f5a100;">[Kontakt_Info_</div>
<div class="tm" style="left:2236px;top:986.89px;font-size:15.83px;color:#f5a100;">Mix]</div>
<div class="tm" style="left:2273.988px;top:986.89px;font-size:15.83px;color:#1a1a1a;">, '\((\w{2})\)$') ELSEIF</div>
<div class="tm" style="left:2236px;top:1014.72px;font-size:15.83px;color:#1a1a1a;">REGEXP_MATCH(</div>
<div class="tm" style="left:2359.461px;top:1014.72px;font-size:15.83px;color:#f5a100;">[Kontakt_Info_Mi</div>
<div class="tm" style="left:2236px;top:1042.55px;font-size:15.83px;color:#f5a100;">x]</div>
<div class="tm" style="left:2254.994px;top:1042.55px;font-size:15.83px;color:#1a1a1a;">, '\|\s*\w{2}$') THEN</div>
<div class="tm" style="left:2236px;top:1070.38px;font-size:15.83px;color:#1a1a1a;">REGEXP_EXTRACT(</div>
<div class="tm" style="left:2378.455px;top:1070.38px;font-size:15.83px;color:#f5a100;">[Kontakt_Info_</div>
<div class="tm" style="left:2236px;top:1098.21px;font-size:15.83px;color:#f5a100;">Mix]</div>
<div class="tm" style="left:2273.988px;top:1098.21px;font-size:15.83px;color:#1a1a1a;">, '\|\s*(\w{2})$') ELSE</div>
<div class="tm" style="left:2236px;top:1126.04px;font-size:15.83px;color:#1a1a1a;">'-' END</div>
<div style="position:absolute;left:2205.2px;top:1169px;width:161px;height:65px;background:#ffa200"></div>
<div style="position:absolute;left:2218.2px;top:1182px;width:135.8px;height:34.8px;border:1.5px solid #c9a000;border-radius:3px;box-sizing:border-box"></div>
<div class="ts" style="left:2232.5px;top:1193.18px;font-size:16.96px;color:#c8a800;font-weight:bold;">Übernommen</div>
<div style="position:absolute;left:2357.6px;top:1182px;width:117.1px;height:34.8px;border:2px solid #404040;border-radius:3px;box-sizing:border-box;background:#fff"></div>
<div class="ts" style="left:2371.2px;top:1192.93px;font-size:17.49px;color:#222;font-weight:bold;">Bearbeiten</div>
<div style="position:absolute;left:2477.8px;top:1182px;width:72.2px;height:34.8px;border:2px solid #404040;border-radius:3px;box-sizing:border-box;background:#fff"></div>
<div style="position:absolute;left:2357.6px;top:1182px;width:8.6px;height:34.8px;background:#ffa200;mix-blend-mode:multiply"></div>
<svg style="left:2504px;top:1190px" width="20" height="18" viewBox="0 0 20 18"><path d="M4 3H1.5v13.5h8" fill="none" stroke="#222" stroke-width="1.6"/><path d="M4 3h9.5v5" fill="none" stroke="#222" stroke-width="1.6"/><path d="M5.5 1.5h6v3h-6z" fill="#222"/><path d="M10 9h5l3 3v5.5h-8z" fill="none" stroke="#222" stroke-width="1.5"/></svg>
<div class="ts" style="left:2218.2px;top:1256.83px;font-size:18.43px;color:#222;">War dies hilfreich?</div>
<svg style="left:2387px;top:1255px" width="19" height="19" viewBox="0 0 19 19"><path d="M1 8h4v10H1z" fill="none" stroke="#333" stroke-width="1.5"/><path d="M5 8l4-7c2 0 2.5 1.5 2 3.5L10.5 7h5.5c1.5 0 2.5 1.2 2 2.7l-2 6.5c-.4 1.2-1.2 1.8-2.4 1.8H5" fill="none" stroke="#333" stroke-width="1.5" stroke-linejoin="round"/></svg>
<svg style="left:2427px;top:1255px" width="19" height="19" viewBox="0 0 19 19"><g transform="rotate(180 9.5 9.5)"><path d="M1 8h4v10H1z" fill="none" stroke="#333" stroke-width="1.5"/><path d="M5 8l4-7c2 0 2.5 1.5 2 3.5L10.5 7h5.5c1.5 0 2.5 1.2 2 2.7l-2 6.5c-.4 1.2-1.2 1.8-2.4 1.8H5" fill="none" stroke="#333" stroke-width="1.5" stroke-linejoin="round"/></g></svg>
<div style="position:absolute;left:2169.4px;top:1346.5px;width:380px;height:103px;border:1.5px solid #c9c9c9;background:#fff;box-sizing:border-box"></div>
<div class="ts" style="left:2179.5px;top:1361.73px;font-size:18.2px;color:#6e6e6e;">Beschreiben Sie Ihre Aufgabe oder stellen</div>
<div class="ts" style="left:2179.5px;top:1387.99px;font-size:17.54px;color:#6e6e6e;">Sie eine Frage...</div>
<div style="position:absolute;left:2517px;top:1417.6px;width:28.3px;height:27.8px;border:1.5px solid #dcdcdc;box-sizing:border-box;background:#fff"></div>
<svg style="left:2522px;top:1423px" width="19" height="17" viewBox="0 0 19 17"><path d="M1.5 1.5l16 7-16 7 3-7z" fill="none" stroke="#9a9a9a" stroke-width="1.4" stroke-linejoin="round"/><path d="M4.5 8.5h9" stroke="#9a9a9a" stroke-width="1.3"/></svg>
<svg style="left:1491px;top:1422px" width="28" height="40" viewBox="0 0 28 40"><path d="M1.5 1.5v33l8-7.5 5.5 12 5-2.2-5.5-11.8h11z" fill="#fff" stroke="#2a2a30" stroke-width="1.6" stroke-linejoin="round"/></svg>
</body></html>
